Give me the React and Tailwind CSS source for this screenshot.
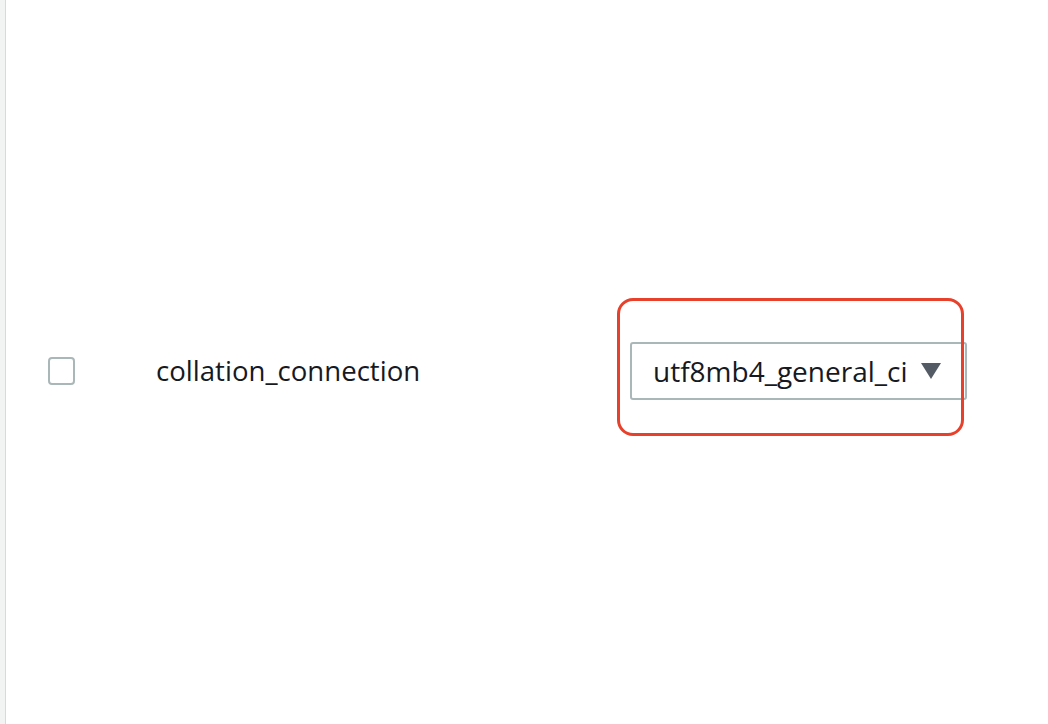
import { useState } from 'react'

function Caret() {
  return (
    <svg width="20" height="16" viewBox="0 0 20 16" className="shrink-0">
      <path d="M0 0 H20 L10 16 Z" fill="#545b64" />
    </svg>
  )
}

export default function App() {
  const [checked, setChecked] = useState(false)

  return (
    <div
      className="flex h-[724px] w-[1048px] bg-white text-[#16191f] overflow-hidden"
      style={{ fontFamily: '"Open Sans", "Noto Sans", Arial, sans-serif' }}
    >
      <div className="w-[6px] shrink-0 bg-[#f2f3f3] border-r border-[#d5dbdb]" />

      <div className="relative flex-1">
        <div className="absolute left-0 right-0 top-[342px] flex h-[58px] items-center">
          <button
            onClick={() => setChecked(!checked)}
            className="ml-[42px] h-[28px] w-[27px] shrink-0 rounded-[4px] border-2 border-[#aab7b8] bg-white"
            aria-label="Seleccionar collation_connection"
          />
          <span className="ml-[81px] text-[27.6px] leading-none">
            collation_connection
          </span>

          <div className="ml-auto mr-[81px] flex h-[58px] w-[337px] items-center justify-between rounded-[3px] border-2 border-[#aab7b8] pl-[21px] pr-[24px]">
            <span className="text-[28px] leading-none">utf8mb4_general_ci</span>
            <Caret />
          </div>
        </div>

        {/* resaltado rojo sobre el selector */}
        <div className="pointer-events-none absolute left-[611px] top-[298px] h-[138px] w-[347px] rounded-[16px] border-[3px] border-[#e8412b]" />
      </div>
    </div>
  )
}
